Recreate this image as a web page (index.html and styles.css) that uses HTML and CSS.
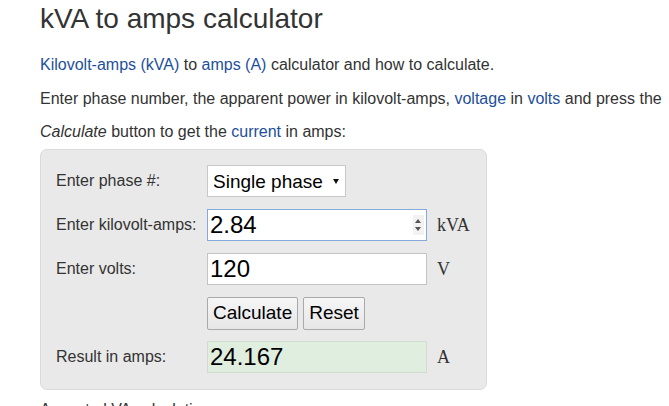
FILE: index.html
```html
<!DOCTYPE html>
<html lang="en">
<head>
  <meta charset="UTF-8" />
  <meta name="viewport" content="width=device-width, initial-scale=1.0" />
  <title>kVA to amps calculator</title>
  <link rel="stylesheet" href="styles.css">
</head>
<body>
  <div class="page">
    <h1>kVA to amps calculator</h1>
    <p><a href="#">Kilovolt-amps (kVA)</a> to <a href="#">amps (A)</a> calculator and how to calculate.</p>
    <p>Enter phase number, the apparent power in kilovolt-amps, <a href="#">voltage</a> in <a href="#">volts</a> and press the <i>Calculate</i> button to get the <a href="#">current</a> in amps:</p>

    <form class="calc" onsubmit="event.preventDefault(); calcular();">
      <label for="phase">Enter phase #:</label>
      <div class="select-wrap">
        <select id="phase">
          <option value="1" selected>Single phase</option>
          <option value="3">Three phase</option>
        </select>
      </div>
      <span></span>

      <label for="kva">Enter kilovolt-amps:</label>
      <div class="num-wrap">
        <input type="text" id="kva" class="focused" value="2.84" />
        <span class="spin"><i class="up"></i><i class="down"></i></span>
      </div>
      <span class="unit">kVA</span>

      <label for="volts">Enter volts:</label>
      <input type="text" id="volts" value="120" />
      <span class="unit">V</span>

      <span></span>
      <div class="buttons">
        <button type="submit">Calculate</button>
        <button type="reset">Reset</button>
      </div>
      <span></span>

      <label for="amps">Result in amps:</label>
      <input type="text" id="amps" class="result" value="24.167" readonly />
      <span class="unit">A</span>
    </form>

    <h2>Amps to kVA calculation ►</h2>
  </div>

  <script>
    function calcular() {
      const kva = parseFloat(document.getElementById('kva').value);
      const v = parseFloat(document.getElementById('volts').value);
      const phase = document.getElementById('phase').value;
      let i = 1000 * kva / v;
      if (phase === '3') i = i / Math.sqrt(3);
      document.getElementById('amps').value = i.toFixed(3);
    }
  </script>
</body>
</html>
```

FILE: styles.css
```css
body {
  margin: 0;
  background: #fff;
  color: #333;
  font-family: 'Liberation Sans', Arial, sans-serif;
  font-size: 16px;
}
.page {
  padding: 1px 0 0 40px;
  width: 625px;
}
h1 {
  font-size: 28px;
  font-weight: normal;
  line-height: 34px;
  margin: 1px 0 12px 0;
}
p {
  margin: 0;
  line-height: 33px;
}
p + p {
  margin-top: 1px;
}
a {
  color: #1d4f9c;
  text-decoration: none;
}
.calc {
  display: grid;
  grid-template-columns: 151px 220px 1fr;
  grid-auto-rows: 32px;
  row-gap: 12px;
  align-items: center;
  width: 415px;
  margin-top: 1px;
  padding: 15px 15px 16px 15px;
  background: #e9e9e9;
  border: 1px solid #dadada;
  border-radius: 7px;
}
label {
  color: #333;
}
input, select {
  box-sizing: border-box;
  height: 32px;
  font-family: 'Liberation Sans', Arial, sans-serif;
  color: #000;
  background: #fff;
  border: 1px solid #c4c4c4;
  margin: 0;
}
input {
  width: 220px;
  font-size: 24px;
  padding: 0 2px;
}
input.focused {
  border-color: #86a8dc;
}
input.result {
  background: #dfeedf;
  border-color: #d0dcd0;
}
.select-wrap {
  position: relative;
  width: 139px;
}
select {
  -webkit-appearance: none;
  appearance: none;
  width: 139px;
  font-size: 19px;
  padding: 0 0 0 5px;
  border-color: #c8c8c8;
  border-radius: 0;
}
.select-wrap::after {
  content: '';
  position: absolute;
  right: 7px;
  top: 14px;
  border-left: 3px solid transparent;
  border-right: 3px solid transparent;
  border-top: 5px solid #111;
  pointer-events: none;
}
.num-wrap {
  position: relative;
  width: 220px;
  height: 32px;
}
.spin {
  position: absolute;
  right: 3px;
  top: 6px;
  width: 11px;
  height: 20px;
  background: #f2f2f2;
}
.spin i {
  position: absolute;
  left: 2px;
  border-left: 3px solid transparent;
  border-right: 3px solid transparent;
}
.spin .up {
  top: 4px;
  border-bottom: 4px solid #555;
}
.spin .down {
  bottom: 4px;
  border-top: 4px solid #555;
}
.unit {
  font-family: 'Liberation Serif', 'Times New Roman', serif;
  font-size: 18px;
  padding-left: 10px;
  color: #333;
}
.buttons {
  display: flex;
  gap: 5px;
  height: 33px;
  margin-top: 0;
}
button {
  font-family: 'Liberation Sans', Arial, sans-serif;
  font-size: 19px;
  color: #000;
  padding: 0 5px;
  background: linear-gradient(#f6f6f6, #e6e6e6);
  border: 1px solid #a9a9a9;
  border-radius: 2px;
  cursor: pointer;
}
h2 {
  font-size: 16px;
  font-weight: normal;
  line-height: 33px;
  margin: 3px 0 0 0;
  color: #333;
}
```
